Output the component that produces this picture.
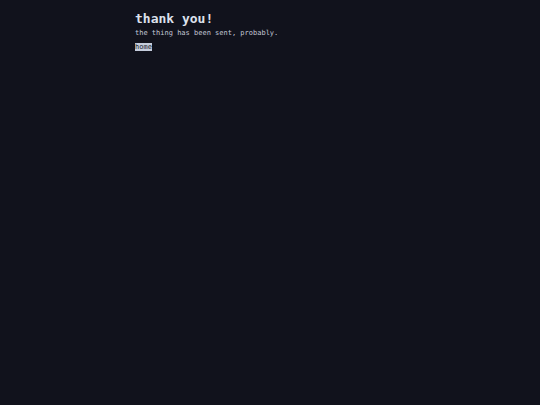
import React from "react";

export default function App() {
  return (
    <main
      className="min-h-screen bg-[#11121c] text-[#d6dae6]"
      style={{ fontFamily: '"DejaVu Sans Mono", "Liberation Mono", monospace' }}
    >
      <section className="mx-auto w-[270px] pt-[11px]">
        <h1 className="text-[13px] font-bold leading-[16px] text-[#dde1ec]">thank you!</h1>
        <p className="mt-[2px] text-[7px] leading-[9px] text-[#c3c8d6]">
          the thing has been sent, probably.
        </p>
        <a
          href="/"
          className="mt-[5px] block w-fit bg-[#c5ccdc] text-[7px] leading-[8px] text-[#1a1c2a]"
        >
          home
        </a>
      </section>
    </main>
  );
}
